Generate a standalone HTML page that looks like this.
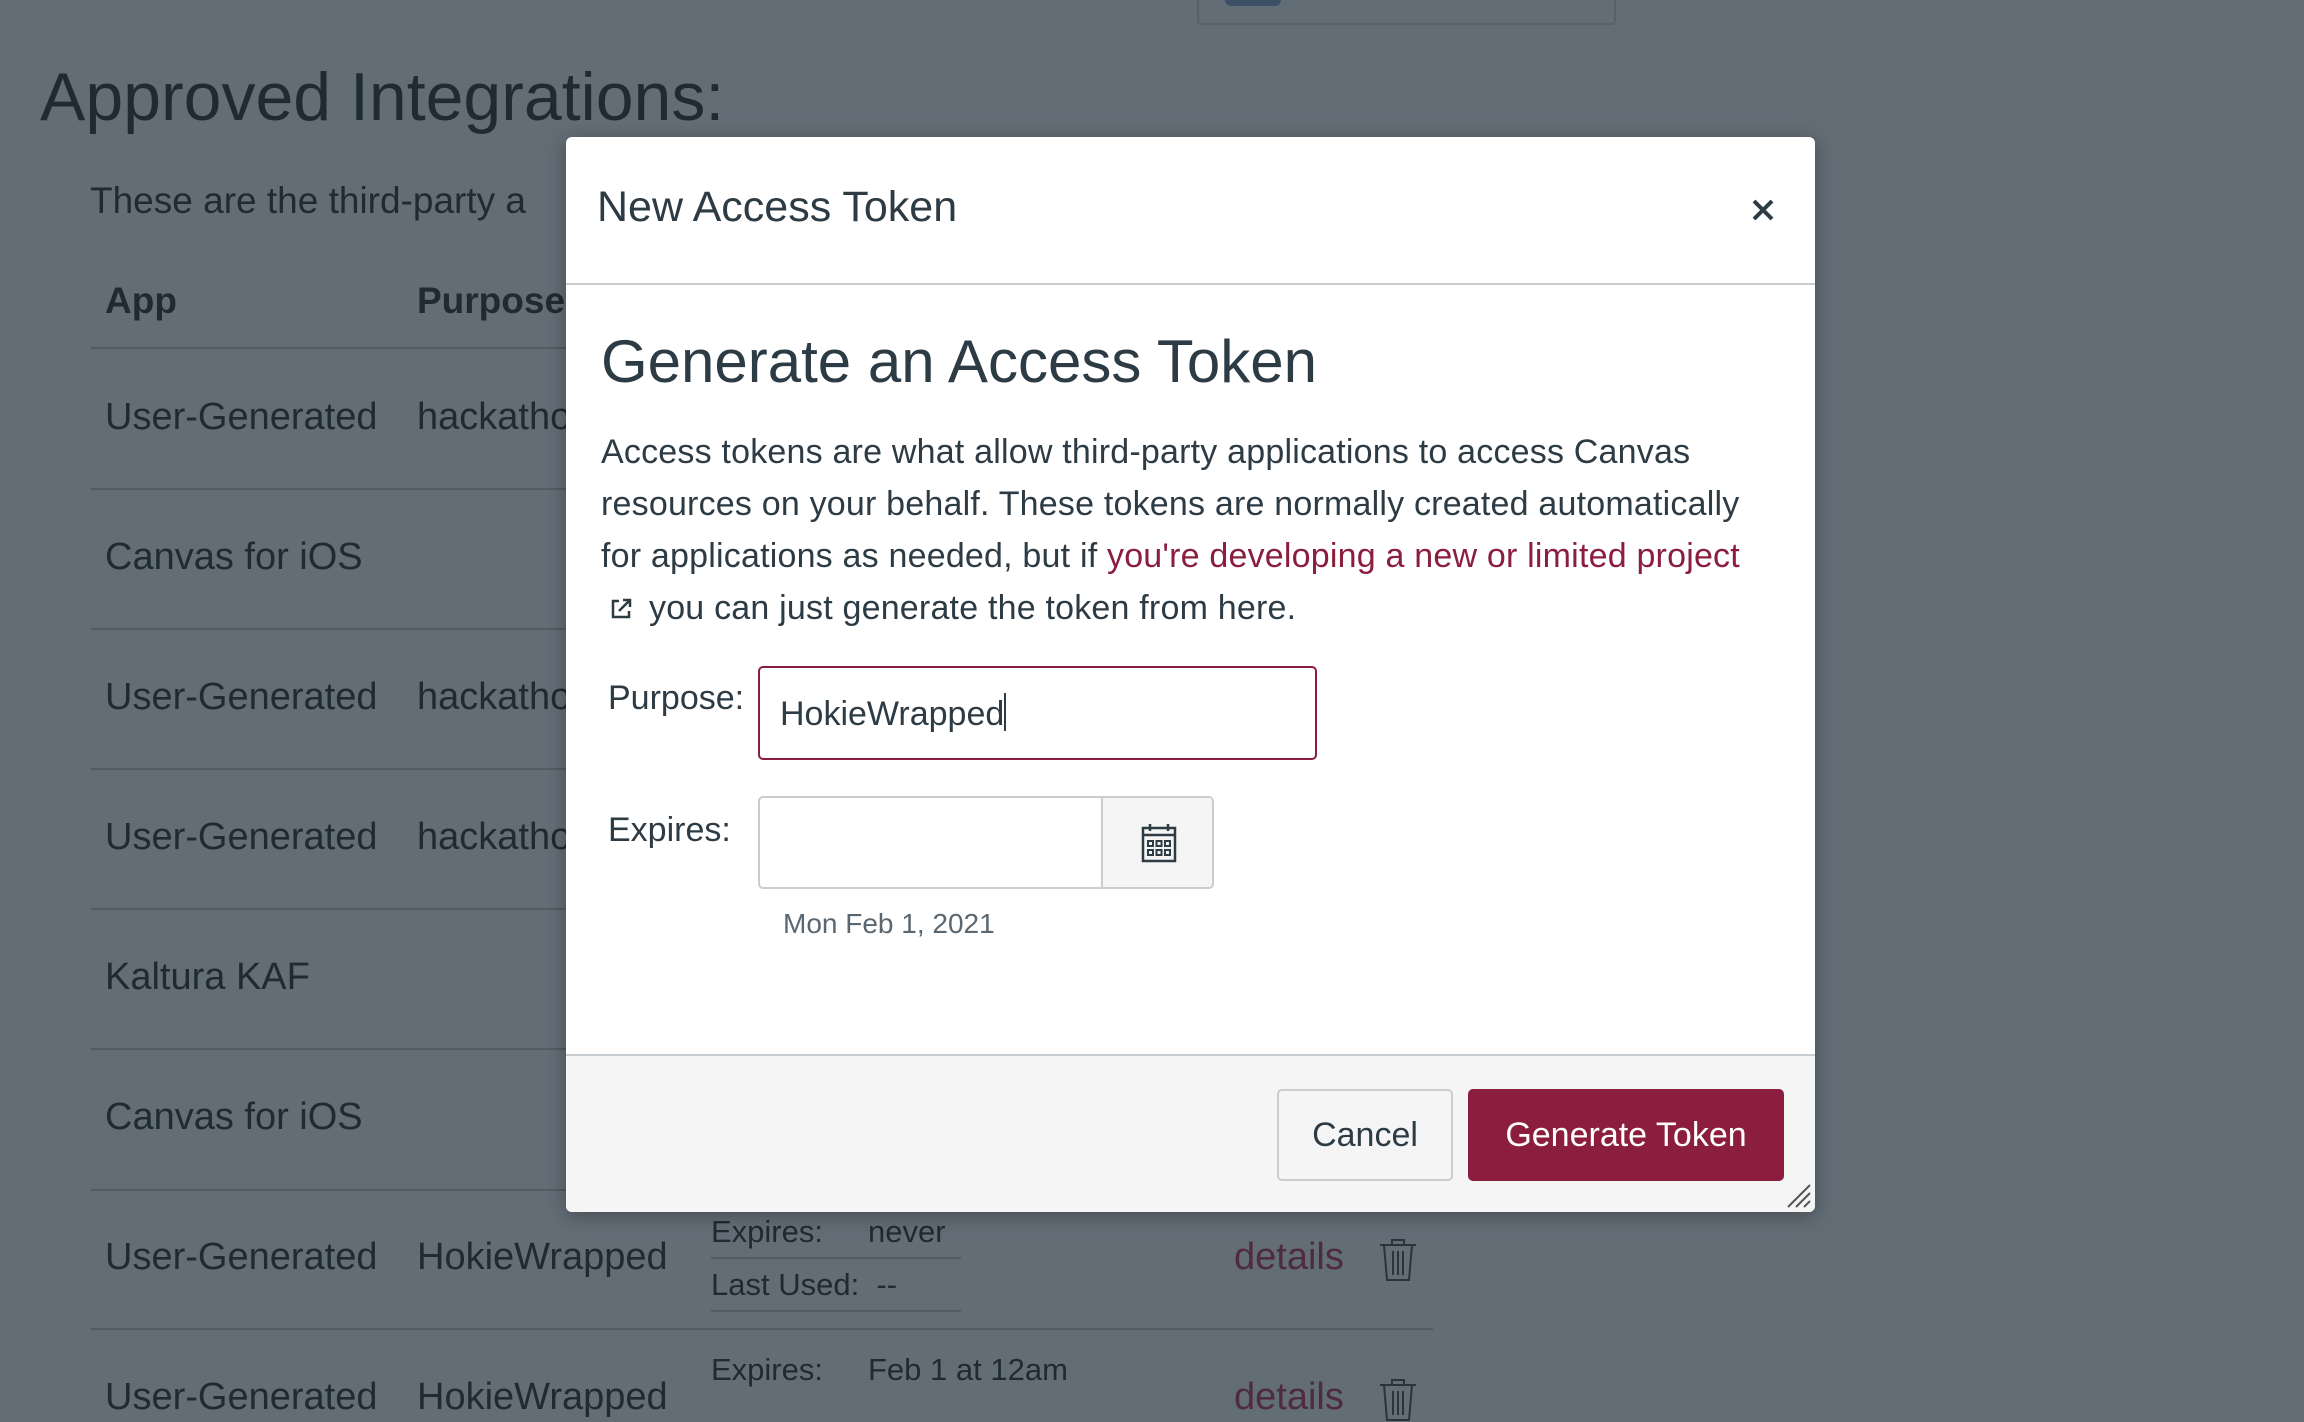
<!DOCTYPE html>
<html><head><meta charset="utf-8"><style>
*{box-sizing:border-box;margin:0;padding:0}
body{width:2304px;height:1413px;overflow:hidden;background:#636d76;font-family:"Liberation Sans",sans-serif;color:#1f2a31;position:relative}
.a{position:absolute;white-space:nowrap}
.bg{color:#1f2a31}
.line{position:absolute;left:91px;width:1342px;height:2px;background:#535c64}
.modal{position:absolute;left:566px;top:137px;width:1249px;height:1075px;background:#fff;border-radius:6px;overflow:hidden;box-shadow:0 4px 20px rgba(0,0,0,.3)}
.m{position:absolute;white-space:nowrap;color:#2d3b45}
.t{font-size:38px}
</style></head><body>
<div class="a" style="left:1197px;top:-10px;width:419px;height:35px;border:2px solid #57616a;border-radius:4px"></div>
<div class="a" style="left:1225px;top:-10px;width:56px;height:16px;background:#3d5066;border-radius:6px"></div>
<div class="a bg" style="left:40px;top:58px;font-size:68px">Approved Integrations:</div>
<div class="a bg" style="left:90px;top:180px;font-size:37px">These are the third-party a</div>
<div class="a bg" style="left:1800px;top:180px;font-size:37px">:</div>
<div class="a bg" style="left:105px;top:280px;font-size:37px;font-weight:bold">App</div>
<div class="a bg" style="left:417px;top:280px;font-size:37px;font-weight:bold">Purpose</div>
<div class="line" style="top:347px"></div>
<div class="a bg t" style="left:105px;top:396px">User-Generated</div><div class="a bg t" style="left:417px;top:396px">hackatho</div>
<div class="line" style="top:488px"></div>
<div class="a bg t" style="left:105px;top:536px">Canvas for iOS</div>
<div class="line" style="top:628px"></div>
<div class="a bg t" style="left:105px;top:676px">User-Generated</div><div class="a bg t" style="left:417px;top:676px">hackatho</div>
<div class="line" style="top:768px"></div>
<div class="a bg t" style="left:105px;top:816px">User-Generated</div><div class="a bg t" style="left:417px;top:816px">hackatho</div>
<div class="line" style="top:908px"></div>
<div class="a bg t" style="left:105px;top:956px">Kaltura KAF</div>
<div class="line" style="top:1048px"></div>
<div class="a bg t" style="left:105px;top:1096px">Canvas for iOS</div>
<div class="line" style="top:1189px"></div>
<div class="a bg t" style="left:105px;top:1236px">User-Generated</div><div class="a bg t" style="left:417px;top:1236px">HokieWrapped</div>
<div class="a bg" style="left:711px;top:1214px;font-size:31px">Expires:</div>
<div class="a bg" style="left:868px;top:1214px;font-size:31px">never</div>
<div class="a" style="left:711px;top:1257px;width:250px;height:2px;background:#535c64"></div>
<div class="a bg" style="left:711px;top:1267px;font-size:31px">Last Used:&nbsp; --</div>
<div class="a" style="left:711px;top:1310px;width:250px;height:2px;background:#535c64"></div>
<div class="a" style="left:1234px;top:1236px;font-size:38px;color:#4f2b40">details</div>
<svg class="a" style="left:1378px;top:1238px" width="40" height="44" viewBox="0 0 40 44" fill="none" stroke="#2a343c" stroke-width="2"><path d="M2 7h36M14 7V2h12v5M6 7l3 35h22l3-35M15 13v24M20 13v24M25 13v24"/></svg>
<div class="line" style="top:1328px"></div>
<div class="a bg t" style="left:105px;top:1376px">User-Generated</div><div class="a bg t" style="left:417px;top:1376px">HokieWrapped</div>
<div class="a bg" style="left:711px;top:1352px;font-size:31px">Expires:</div>
<div class="a bg" style="left:868px;top:1352px;font-size:31px">Feb 1 at 12am</div>
<div class="a" style="left:1234px;top:1376px;font-size:38px;color:#4f2b40">details</div>
<svg class="a" style="left:1378px;top:1378px" width="40" height="44" viewBox="0 0 40 44" fill="none" stroke="#2a343c" stroke-width="2"><path d="M2 7h36M14 7V2h12v5M6 7l3 35h22l3-35M15 13v24M20 13v24M25 13v24"/></svg>

<div class="modal">
 <div class="m" style="left:31px;top:46px;font-size:43px">New Access Token</div>
 <svg class="a" style="left:1185px;top:61px" width="24" height="24" viewBox="0 0 24 24" stroke="#2d3b45" stroke-width="4"><path d="M3 3l18 18M21 3L3 21"/></svg>
 <div class="a" style="left:0;top:146px;width:1249px;height:2px;background:#c7cdd1"></div>
 <div class="m" style="left:35px;top:190px;font-size:60px">Generate an Access Token</div>
 <div class="m" style="left:35px;top:289px;font-size:34px;line-height:52px;letter-spacing:0.2px">Access tokens are what allow third-party applications to access Canvas<br>resources on your behalf. These tokens are normally created automatically<br>for applications as needed, but if <span style="color:#8b1e3f">you're developing a new or limited project</span><br><span style="display:inline-block;width:48px"><svg width="24" height="24" viewBox="0 0 24 24" fill="none" stroke="#2d3b45" stroke-width="2.5" style="margin-left:8px;vertical-align:-2px"><path d="M10 4H4v16h16v-6M14 3h7v7M21 3L10 14"/></svg></span>you can just generate the token from here.</div>
 <div class="m" style="left:42px;top:542px;font-size:34px">Purpose:</div>
 <div class="a" style="left:192px;top:529px;width:559px;height:94px;border:2px solid #8b1e3f;border-radius:5px"></div>
 <div class="m" style="left:214px;top:556px;font-size:34px">HokieWrapped<span style="display:inline-block;width:2px;height:38px;background:#2d3b45;vertical-align:-6px"></span></div>
 <div class="m" style="left:42px;top:674px;font-size:34px">Expires:</div>
 <div class="a" style="left:192px;top:659px;width:456px;height:93px;border:2px solid #c7cdd1;border-radius:5px;overflow:hidden">
   <div class="a" style="left:341px;top:0;width:113px;height:93px;background:#f5f5f5;border-left:2px solid #c7cdd1"></div>
 </div>
 <svg class="a" style="left:575px;top:686px" width="36" height="40" viewBox="0 0 36 40" fill="none" stroke="#2d3b45" stroke-width="2.5"><rect x="2" y="5" width="32" height="33"/><path d="M2 12h32M9 1v7M27 1v7"/><path d="M7 18h5v5H7zM15.5 18h5v5h-5zM24 18h5v5h-5zM7 27h5v5H7zM15.5 27h5v5h-5zM24 27h5v5h-5z" stroke-width="2"/></svg>
 <div class="m" style="left:217px;top:771px;font-size:28px;color:#5b6770">Mon Feb 1, 2021</div>
 <div class="a" style="left:0;top:917px;width:1249px;height:158px;background:#f5f5f5;border-top:2px solid #c7cdd1"></div>
 <div class="a" style="left:711px;top:952px;width:176px;height:92px;border:2px solid #c7cdd1;border-radius:5px;background:#f5f5f5;font-size:34px;color:#2d3b45;text-align:center;line-height:88px">Cancel</div>
 <div class="a" style="left:902px;top:952px;width:316px;height:92px;border-radius:5px;background:#8b1e3f;font-size:34px;color:#fff;text-align:center;line-height:92px">Generate Token</div>
 <svg class="a" style="left:1220px;top:1046px" width="26" height="26" viewBox="0 0 26 26" stroke="#555" stroke-width="2"><path d="M2 24L24 2M10 24L24 10M18 24l6-6"/></svg>
</div>
</body></html>
